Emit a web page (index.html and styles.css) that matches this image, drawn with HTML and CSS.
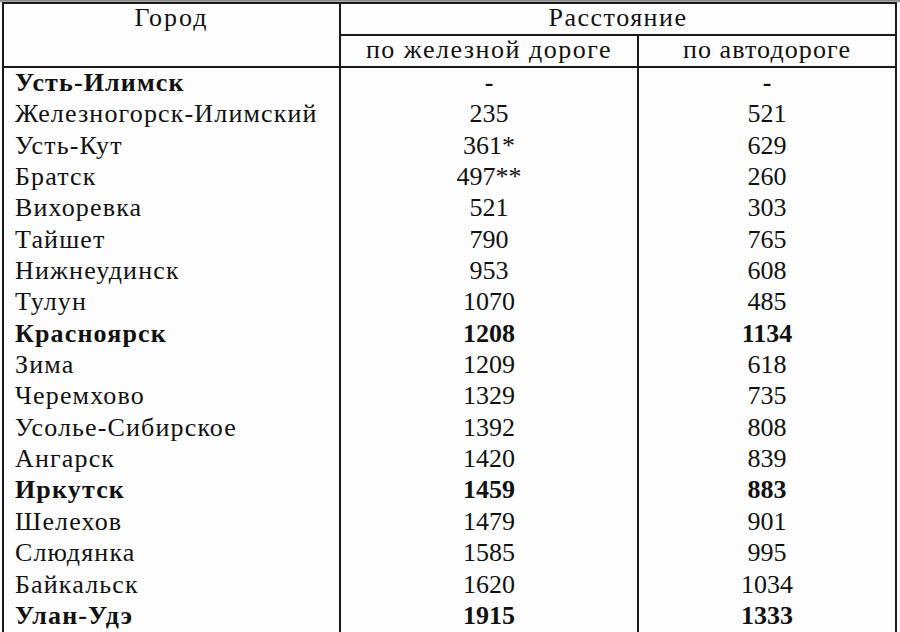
FILE: index.html
```html
<!DOCTYPE html>
<html lang="ru">
<head>
<meta charset="utf-8">
<title>Расстояние</title>
<link rel="stylesheet" href="styles.css">
</head>
<body>
<div class="page">
<table class="dist">
  <colgroup>
    <col class="c-city">
    <col class="c-rail">
    <col class="c-road">
  </colgroup>
  <thead>
    <tr class="h1">
      <th rowspan="2" class="city-h">Город</th>
      <th colspan="2">Расстояние</th>
    </tr>
    <tr class="h2">
      <th>по железной дороге</th>
      <th class="road-h">по автодороге</th>
    </tr>
  </thead>
  <tbody>
    <tr class="b"><td>Усть-Илимск</td><td>-</td><td>-</td></tr>
    <tr><td>Железногорск-Илимский</td><td>235</td><td>521</td></tr>
    <tr><td>Усть-Кут</td><td>361*</td><td>629</td></tr>
    <tr><td>Братск</td><td>497**</td><td>260</td></tr>
    <tr><td>Вихоревка</td><td>521</td><td>303</td></tr>
    <tr><td>Тайшет</td><td>790</td><td>765</td></tr>
    <tr><td>Нижнеудинск</td><td>953</td><td>608</td></tr>
    <tr><td>Тулун</td><td>1070</td><td>485</td></tr>
    <tr class="b"><td>Красноярск</td><td>1208</td><td>1134</td></tr>
    <tr><td>Зима</td><td>1209</td><td>618</td></tr>
    <tr><td>Черемхово</td><td>1329</td><td>735</td></tr>
    <tr><td>Усолье-Сибирское</td><td>1392</td><td>808</td></tr>
    <tr><td>Ангарск</td><td>1420</td><td>839</td></tr>
    <tr class="b"><td>Иркутск</td><td>1459</td><td>883</td></tr>
    <tr><td>Шелехов</td><td>1479</td><td>901</td></tr>
    <tr><td>Слюдянка</td><td>1585</td><td>995</td></tr>
    <tr><td>Байкальск</td><td>1620</td><td>1034</td></tr>
    <tr class="b"><td>Улан-Удэ</td><td>1915</td><td>1333</td></tr>
  </tbody>
</table>
</div>
</body>
</html>
```

FILE: styles.css
```css
html, body {
  margin: 0;
  padding: 0;
}
body {
  background: linear-gradient(to bottom, #7d7d7d 0px, #b4b4b4 2px, #ffffff 3px);
  background-repeat: no-repeat;
  background-size: 100% 4px;
  background-color: #fdfdfd;
}
.page {
  padding: 2px 0 0 2px;
}
.dist {
  border-collapse: collapse;
  table-layout: fixed;
  width: 893px;
  font-family: "Liberation Serif", "Times New Roman", serif;
  font-size: 26px;
  color: #111;
}
.c-city { width: 337px; }
.c-rail { width: 298px; }
.c-road { width: 258px; }
.dist th, .dist td {
  padding: 0;
  white-space: nowrap;
}
.dist th {
  font-weight: normal;
  border: 2px solid #1a1a1a;
  text-align: center;
  line-height: 28px;
  padding-bottom: 2px;
  letter-spacing: 1.5px;
}
.dist th.road-h {
  letter-spacing: 1.1px;
}
.dist th.city-h {
  vertical-align: top;
  letter-spacing: 2px;
}
.dist td {
  border-left: 2px solid #1a1a1a;
  border-right: 2px solid #1a1a1a;
  line-height: 29.35px;
  padding-bottom: 2px;
  text-align: center;
}
.dist td:first-child {
  text-align: left;
  padding-left: 11px;
  letter-spacing: 1.15px;
}
.dist tbody tr:last-child td {
  border-bottom: 2px solid #1a1a1a;
}
.dist tr.b td {
  font-weight: bold;
}
```
